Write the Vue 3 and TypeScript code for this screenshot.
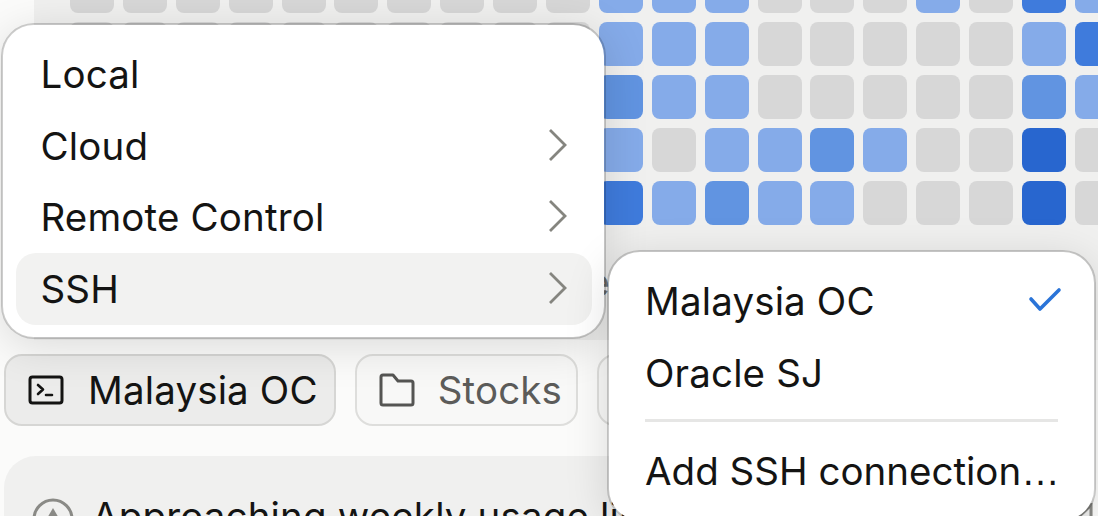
<script setup lang="ts">
type Tone = 'g' | 'l' | 'm' | 's' | 'd'
const pattern: string[] = [
  'gggggggggglllggglgsl',
  'gggggggggglllgggggls',
  'ggggggggggmllgggggml',
  'gggggggggglgllmlggdg',
  'ggggggggggslmllgggdg',
]
const cells: Tone[] = pattern.join('').split('') as Tone[]
const items = [
  { label: 'Local', arrow: false, active: false },
  { label: 'Cloud', arrow: true, active: false },
  { label: 'Remote Control', arrow: true, active: false },
  { label: 'SSH', arrow: true, active: true },
]
</script>

<template>
  <div class="page">
    <section class="panel">
      <div class="grid">
        <span v-for="(c, i) in cells" :key="i" class="cell" :class="c"></span>
      </div>
      <div class="legend">More</div>
    </section>

    <div class="chips">
      <div class="chip current">
        <svg width="36" height="30" viewBox="0 0 36 30" fill="none" stroke="#141413" stroke-width="3" stroke-linejoin="round" stroke-linecap="round">
          <rect x="2" y="2" width="32" height="26" rx="2.5" />
          <path d="M10 10l5 4.5-5 4.5M18 20h6" stroke-width="2.6" />
        </svg>
        <span>Malaysia OC</span>
      </div>
      <div class="chip muted">
        <svg width="36" height="34" viewBox="0 0 36 34" fill="none" stroke="#555553" stroke-width="3" stroke-linejoin="round">
          <path d="M2 4a2 2 0 0 1 2-2h10l5 6h13a2 2 0 0 1 2 2v20a2 2 0 0 1-2 2H4a2 2 0 0 1-2-2z" />
        </svg>
        <span>Stocks</span>
      </div>
      <div class="chip muted"><span>Files</span></div>
    </div>

    <div class="notice">
      <svg class="notice-icon" width="42" height="42" viewBox="0 0 42 42" fill="none">
        <circle cx="21" cy="21" r="19" stroke="#8a8a86" stroke-width="3" />
        <path d="M21 10l7 12H14z" fill="#8a8a86" />
      </svg>
      <span>Approaching weekly usage limit</span>
      <svg class="notice-end" width="18" height="16" viewBox="0 0 18 16" fill="none" stroke="#8a8a86" stroke-width="3">
        <path d="M1 16L16 2v14" />
      </svg>
    </div>

    <div class="menu main-menu">
      <div v-for="item in items" :key="item.label" class="row" :class="{ active: item.active }">
        <span>{{ item.label }}</span>
        <svg v-if="item.arrow" class="chevron" width="20" height="34" viewBox="0 0 20 34" fill="none" stroke="#85857f" stroke-width="2.8">
          <path d="M2 2l15 15L2 32" />
        </svg>
      </div>
    </div>

    <div class="menu sub-menu">
      <div class="row">
        <span>Malaysia OC</span>
        <svg class="check" width="34" height="26" viewBox="0 0 34 26" fill="none" stroke="#2a74d8" stroke-width="3.6" stroke-linecap="round" stroke-linejoin="round">
          <path d="M3 12l9 10L31 3" />
        </svg>
      </div>
      <div class="row"><span>Oracle SJ</span></div>
      <div class="divider"></div>
      <div class="row add"><span>Add SSH connection<span class="dots">…</span></span></div>
    </div>
  </div>
</template>

<style scoped>
.page {
  position: relative;
  width: 1098px;
  height: 516px;
  overflow: hidden;
  background: #fbfbfa;
  color: #141413;
  font-family: Inter, "Liberation Sans", sans-serif;
  font-size: 38.5px;
  line-height: 44px;
  letter-spacing: 0.15px;
}
.panel {
  display: flex;
  flex-direction: column;
  box-sizing: border-box;
  height: 340px;
  margin-left: 34px;
  padding-left: 36px;
  background: #f0f0ef;
  overflow: hidden;
}
.grid {
  display: grid;
  flex: none;
  grid-template-columns: repeat(20, 44px);
  grid-auto-rows: 44px;
  column-gap: 8.9px;
  row-gap: 9px;
  margin-top: -31px;
}
.cell { border-radius: 8px; }
.g { background: #d7d7d7; }
.l { background: #85abe9; }
.m { background: #6194e1; }
.s { background: #3f7bdc; }
.d { background: #2866cf; }
.legend {
  margin-top: 35px;
  padding-left: 445px;
  color: #777775;
}
.chips {
  display: flex;
  gap: 19px;
  margin-top: 14px;
  padding-left: 4px;
}
.chip {
  display: flex;
  flex: none;
  align-items: center;
  gap: 24px;
  box-sizing: border-box;
  height: 72px;
  padding: 0 16px 0 22px;
  border: 2.5px solid #d6d6d4;
  border-radius: 18px;
  background: #f8f8f7;
  white-space: nowrap;
}
.current { background: #ececeb; }
.muted {
  gap: 23px;
  padding-right: 14px;
  border-color: #dededc;
  color: #5c5c5a;
}
.notice {
  display: flex;
  gap: 18px;
  align-items: flex-start;
  box-sizing: border-box;
  height: 120px;
  margin: 30px 5px 0 4px;
  padding: 38px 0 0 28px;
  border-radius: 32px;
  background: #f0f0ef;
  white-space: nowrap;
}
.notice-icon { flex: none; margin-top: 4px; }
.notice-end { flex: none; margin: 9px 0 0 auto; }
.menu {
  position: absolute;
  box-sizing: border-box;
  border: 2.5px solid rgba(0, 0, 0, 0.18);
  border-radius: 33px;
  background: #fff;
  background-clip: padding-box;
  box-shadow: 0 8px 44px rgba(0, 0, 0, 0.13);
}
.main-menu {
  left: 1px;
  top: 23px;
  width: 605px;
  padding: 13.5px 12px 12px 12.5px;
}
.sub-menu {
  left: 607px;
  top: 250px;
  width: 489px;
  padding: 13px 12px 12px;
}
.row {
  display: flex;
  align-items: center;
  justify-content: space-between;
  box-sizing: border-box;
  height: 71.5px;
  padding: 0 24px 0 25px;
  border-radius: 20px;
  white-space: nowrap;
}
.sub-menu .row {
  height: 72px;
  padding: 0 20px 0 24px;
}
.add { letter-spacing: 0; }
.dots { font-family: "Liberation Sans", sans-serif; }
.chevron { margin-top: -2px; }
.check { margin-top: -2px; }
.active { background: #f2f2f1; }
.divider {
  height: 2.5px;
  margin: 10px 24px 14px;
  background: #e6e6e5;
}
</style>
